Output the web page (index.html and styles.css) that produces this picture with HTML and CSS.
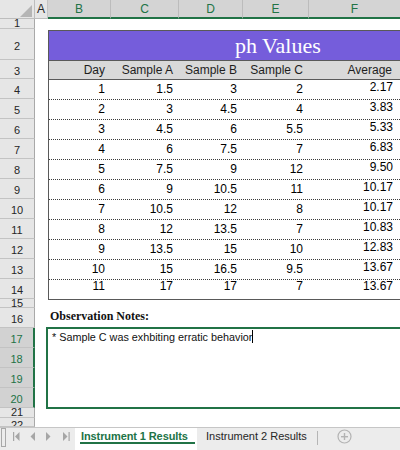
FILE: index.html
```html
<!DOCTYPE html>
<html>
<head>
<meta charset="utf-8">
<link rel="stylesheet" href="styles.css">
</head>
<body>
<div class="sheet">
  <div class="colheads">
    <div class="corner"><svg class="corner-tri" width="34" height="18" viewBox="0 0 34 18"><polygon points="32,5 32,17 20,17" fill="#b5b5b5"/></svg></div>
    <div class="ch w-a">A</div>
    <div class="ch sel w-b">B</div>
    <div class="ch sel w-c">C</div>
    <div class="ch sel w-d">D</div>
    <div class="ch sel w-e">E</div>
    <div class="ch sel w-f">F</div>
  </div>
  <div class="body">
    <div class="rowheads">
      <div class="rh h10 tight">1</div>
      <div class="rh h31">2</div>
      <div class="rh h19">3</div>
      <div class="rh">4</div>
      <div class="rh">5</div>
      <div class="rh">6</div>
      <div class="rh">7</div>
      <div class="rh">8</div>
      <div class="rh">9</div>
      <div class="rh">10</div>
      <div class="rh">11</div>
      <div class="rh">12</div>
      <div class="rh">13</div>
      <div class="rh">14</div>
      <div class="rh h9 short">15</div>
      <div class="rh">16</div>
      <div class="rh sel">17</div>
      <div class="rh sel">18</div>
      <div class="rh sel">19</div>
      <div class="rh sel">20</div>
      <div class="rh h10 short">21</div>
      <div class="rh h9 short low">22</div>
    </div>
    <div class="cells">
      <div class="tbl">
        <div class="title">ph Values</div>
        <div class="trow thead"><span>Day</span><span>Sample A</span><span>Sample B</span><span>Sample C</span><span class="avgh">Average</span></div>
        <div class="trow"><span>1</span><span>1.5</span><span>3</span><span>2</span><span class="avg">2.17</span></div>
        <div class="trow"><span>2</span><span>3</span><span>4.5</span><span>4</span><span class="avg">3.83</span></div>
        <div class="trow"><span>3</span><span>4.5</span><span>6</span><span>5.5</span><span class="avg">5.33</span></div>
        <div class="trow"><span>4</span><span>6</span><span>7.5</span><span>7</span><span class="avg">6.83</span></div>
        <div class="trow"><span>5</span><span>7.5</span><span>9</span><span>12</span><span class="avg">9.50</span></div>
        <div class="trow"><span>6</span><span>9</span><span>10.5</span><span>11</span><span class="avg">10.17</span></div>
        <div class="trow"><span>7</span><span>10.5</span><span>12</span><span>8</span><span class="avg">10.17</span></div>
        <div class="trow"><span>8</span><span>12</span><span>13.5</span><span>7</span><span class="avg">10.83</span></div>
        <div class="trow"><span>9</span><span>13.5</span><span>15</span><span>10</span><span class="avg">12.83</span></div>
        <div class="trow"><span>10</span><span>15</span><span>16.5</span><span>9.5</span><span class="avg">13.67</span></div>
        <div class="trow last"><span>11</span><span>17</span><span>17</span><span>7</span><span class="avg">13.67</span></div>
      </div>
      <div class="notes-label">Observation Notes:</div>
      <div class="notes-box"><span class="notes-text">* Sample C was exhbiting erratic behavior</span><span class="caret"></span></div>
    </div>
  </div>
</div>
<div class="tabbar">
  <svg class="nav" width="72" height="22" viewBox="0 0 72 22">
    <rect x="1.5" y="0.5" width="4" height="18" fill="none" stroke="#a8a8a8"/>
    <rect x="13" y="4" width="1.2" height="9" fill="#a6a6a6"/>
    <polygon points="19.5,4 19.5,13 15,8.5" fill="#a6a6a6"/>
    <polygon points="35,4 35,13 30.5,8.5" fill="#a6a6a6"/>
    <polygon points="46,4 46,13 50.5,8.5" fill="#a6a6a6"/>
    <polygon points="63,4 63,13 67.5,8.5" fill="#a6a6a6"/>
    <rect x="68.5" y="4" width="1.2" height="9" fill="#a6a6a6"/>
  </svg>
  <div class="tab active"><span class="tab-label">Instrument 1 Results</span></div>
  <div class="tab"><span class="tab-label">Instrument 2 Results</span></div>
  <div class="tab-sep"></div>
  <svg class="plus" width="15" height="15" viewBox="0 0 15 15">
    <circle cx="7.5" cy="7.5" r="6.5" fill="none" stroke="#b3b3b3" stroke-width="1.2"/>
    <rect x="4" y="7" width="7" height="1.4" fill="#b3b3b3"/>
    <rect x="6.8" y="4" width="1.4" height="7" fill="#b3b3b3"/>
  </svg>
</div>
</body>
</html>
```

FILE: styles.css
```css
* { box-sizing: border-box; }
html, body { margin: 0; padding: 0; }
body {
  width: 400px;
  height: 450px;
  overflow: hidden;
  background: #ffffff;
  font-family: "Liberation Sans", Arial, sans-serif;
  color: #000;
}
.sheet { display: flex; flex-direction: column; height: 427px; overflow: hidden; }

/* column headers */
.colheads { display: flex; height: 19px; flex: none; }
.corner {
  width: 35px; height: 19px;
  background: #e6e6e6;
  border-right: 1px solid #bdbdbd;
  border-bottom: 1px solid #bdbdbd;
}
.corner-tri { display: block; }
.ch {
  height: 19px;
  background: #e6e6e6;
  border-right: 1px solid #c4c4c4;
  border-bottom: 1px solid #bdbdbd;
  font-size: 12px;
  line-height: 14px;
  padding-top: 2px;
  text-align: center;
  color: #262626;
}
.ch.sel { background: #d4d4d4; color: #217346; border-bottom: 2px solid #217346; border-right-color: #bcbcbc; }
.w-a { width: 13px; }
.w-b { width: 63px; }
.w-c { width: 68px; }
.w-d { width: 64px; }
.w-e { width: 66px; }
.w-f { flex: 1; border-right: none; }

/* body */
.body { display: flex; flex: 1; }
.rowheads { width: 35px; flex: none; display: flex; flex-direction: column; }
.rh {
  height: 20px;
  flex: none;
  background: #e6e6e6;
  border-right: 1px solid #a9a9a9;
  border-bottom: 1px solid #c3c3c3;
  font-size: 11px;
  color: #262626;
  display: flex;
  align-items: center;
  justify-content: center;
  padding-top: 3px;
  overflow: hidden;
}
.rh.h10 { height: 10px; }
.rh.h31 { height: 31px; }
.rh.h19 { height: 19px; }
.rh.h9 { height: 9px; }
.rh.tight { padding-top: 0; line-height: 9px; }
.rh.short { align-items: flex-start; padding-top: 0; line-height: 8px; }
.rh.short.low { padding-top: 5px; line-height: 4px; }
.rh.sel { background: #d2d2d2; color: #217346; border-right: 2px solid #217346; }

.cells {
  flex: 1;
  display: grid;
  grid-template-columns: 13px 63px 68px 64px 66px 1fr;
  grid-template-rows: 10px 31px 19px repeat(11, 20px) 9px repeat(5, 20px) 10px 9px;
}

/* table */
.tbl {
  grid-column: 2 / 7;
  grid-row: 2 / 15;
  align-self: start;
  margin-top: 1px;
  border-top: 1px solid #595959;
  border-left: 1px solid #595959;
  border-bottom: 1px solid #595959;
}
.title {
  height: 30px;
  background: #755ddb;
  border-bottom: 1px solid #595959;
  color: #ffffff;
  font-family: "Liberation Serif", "Times New Roman", serif;
  font-size: 22px;
  line-height: 29px;
  padding-left: 186px;
  white-space: nowrap;
}
.trow {
  display: grid;
  grid-template-columns: 62px 68px 64px 66px 1fr;
  height: 20px;
  border-bottom: 1px dotted #3c3c3c;
  font-size: 12px;
  line-height: 19px;
}
.trow span { text-align: right; padding-right: 6px; white-space: nowrap; }
.trow span.avg { padding-right: 7px; line-height: 14px; }
.trow.thead {
  height: 19px;
  background: #d9d9d9;
  border-bottom: 1px solid #595959;
  line-height: 18px;
  color: #1e1e1e;
}
.trow.thead span.avgh { padding-right: 8px; }
.trow.last { height: 19px; border-bottom: none; }
.trow.last span, .trow.last span.avg { line-height: 10px; padding-top: 1px; }

/* notes */
.notes-label {
  grid-column: 2 / 7;
  grid-row: 16;
  font-family: "Liberation Serif", "Times New Roman", serif;
  font-weight: bold;
  font-size: 12px;
  line-height: 16px;
  padding-left: 2px;
  color: #111;
}
.notes-box {
  grid-column: 2 / 7;
  grid-row: 17 / 21;
  margin: -1px 0 -1px -2px;
  border: 2px solid #217346;
  border-right: none;
  padding: 2px 0 0 4px;
  font-size: 10.8px;
  line-height: 12px;
  color: #111;
  display: flex;
  align-items: flex-start;
}
.caret { width: 1px; height: 13px; background: #000; margin-left: 0; margin-top: -1px; }

/* tab bar */
.tabbar {
  height: 23px;
  background: #ececec;
  border-top: 1px solid #c6c6c6;
  display: flex;
  align-items: stretch;
}
.nav { display: block; flex: none; }
.tab {
  flex: none;
  padding-top: 2px;
  font-size: 11px;
  line-height: 12px;
  color: #262626;
  margin-left: 9px;
}
.tab.active {
  margin-left: 3px;
  width: 122px;
  background: #ffffff;
  padding-left: 5px;
  color: #217346;
  font-weight: bold;
  letter-spacing: -0.1px;
}
.tab.active .tab-label {
  display: block;
  width: 115px;
  padding-left: 1px;
  border-bottom: 2px solid #217346;
  white-space: nowrap;
}
.tab-label { white-space: nowrap; }
.tab-sep { width: 1px; height: 14px; background: #b5b5b5; margin: 3px 0 0 10px; flex: none; }
.plus { display: block; flex: none; margin: 1px 0 0 19px; }
```
